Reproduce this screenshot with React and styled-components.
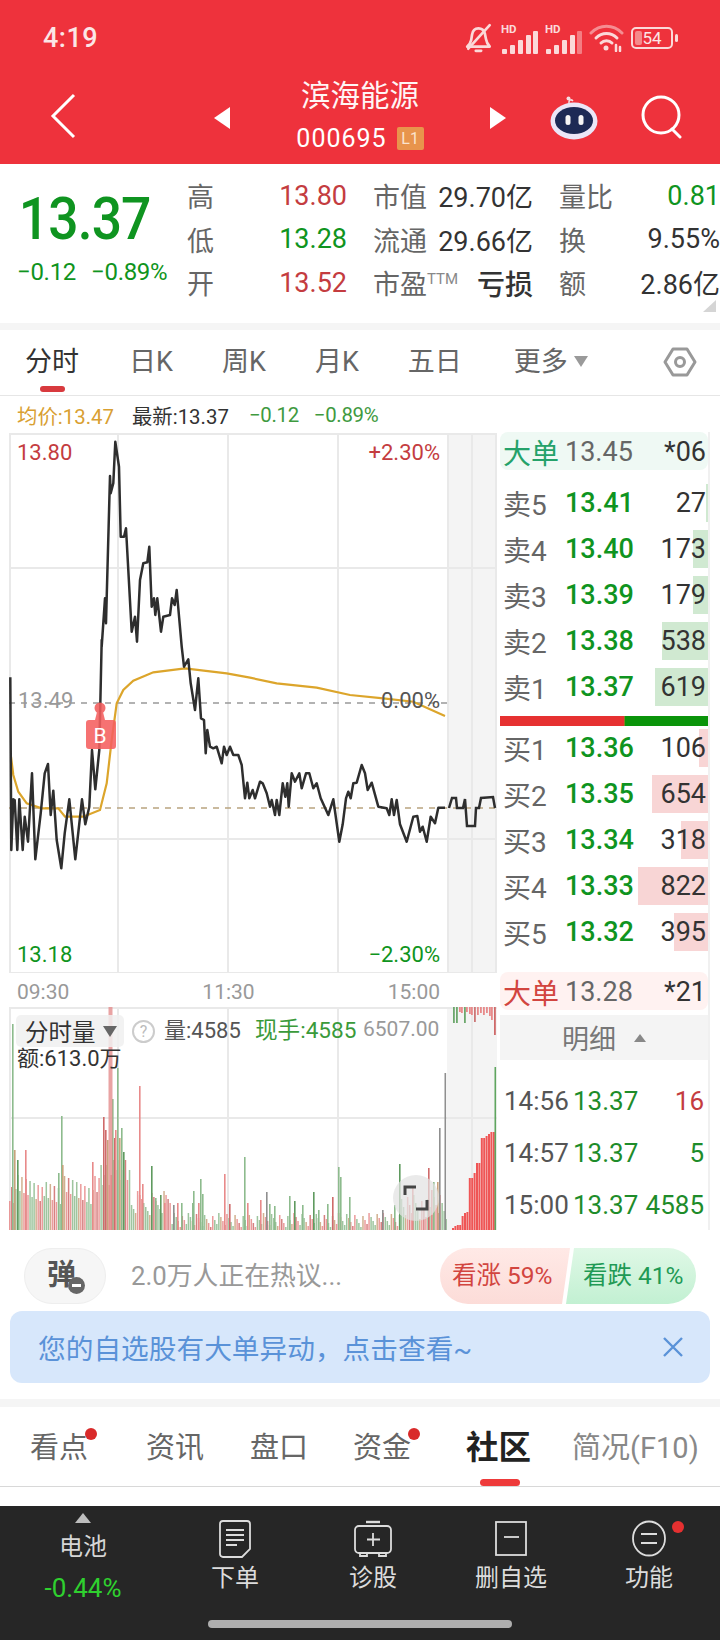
import React from "react";
import styled, { createGlobalStyle } from "styled-components";

const GREEN = "#0f9420";
const RED = "#c43c40";
const TEXT = "#333333";
const MUTED = "#666666";
const FONT = 'Roboto, "Noto Sans CJK SC", sans-serif';

const GlobalStyle = createGlobalStyle`
  html, body {
    margin: 0;
    padding: 0;
    background: #fff;
    font-family: ${FONT};
  }
  * {
    box-sizing: border-box;
  }
`;

const Page = styled.div`
  position: relative;
  width: 720px;
  height: 1640px;
  overflow: hidden;
  background: #fff;
  display: flex;
  flex-direction: column;
`;

/* red header */
const Header = styled.header`
  height: 164px;
  flex: none;
  background: #ee323c;
  color: #fff;
`;

const StatusBar = styled.div`
  height: 76px;
  padding: 0 42px 0 43px;
  display: flex;
  align-items: center;
  justify-content: space-between;
`;

const Clock = styled.div`
  font-size: 27px;
  font-weight: 500;
  color: #fbe6e6;
  letter-spacing: 0.5px;
`;

const StatusIcons = styled.div`
  display: flex;
  align-items: center;
  gap: 7px;
`;

const NavBar = styled.div`
  height: 88px;
  display: grid;
  grid-template-columns: 214px 16px 1fr 16px 214px;
  align-items: center;
`;

const BackSlot = styled.div`
  padding-left: 50px;
  display: flex;
  align-items: center;
  padding-bottom: 12px;
`;

const Triangle = styled.div`
  width: 0;
  height: 0;
  margin-bottom: 8px;
  border-top: 11px solid transparent;
  border-bottom: 11px solid transparent;
  ${(p) =>
    p.$dir === "left"
      ? "border-right: 16px solid #fff;"
      : "border-left: 16px solid #fff;"}
`;

const StockTitle = styled.div`
  display: flex;
  flex-direction: column;
  align-items: center;
  padding-bottom: 8px;
`;

const StockName = styled.div`
  font-size: 29.5px;
  line-height: 40px;
  color: #fff5f5;
`;

const CodeRow = styled.div`
  height: 44px;
  display: flex;
  align-items: center;
  gap: 10px;
`;

const StockCode = styled.div`
  font-size: 25px;
  letter-spacing: 1px;
`;

const LevelBadge = styled.div`
  width: 27px;
  height: 23px;
  border-radius: 2px;
  background: #e8944c;
  color: #fbe3cd;
  font-size: 16px;
  line-height: 23px;
  text-align: center;
`;

const NavTools = styled.div`
  display: flex;
  align-items: center;
  gap: 42px;
  padding-left: 44px;
  padding-bottom: 10px;
`;

/* quote summary */
const QuoteStrip = styled.section`
  height: 159px;
  flex: none;
  display: flex;
  padding-top: 10px;
`;

const PriceBlock = styled.div`
  width: 188px;
  padding: 12px 0 0 17px;
`;

const LastPrice = styled.div`
  font-size: 60px;
  line-height: 64px;
  margin-top: 1px;
  padding-left: 2px;
  font-weight: 500;
  color: ${GREEN};
  letter-spacing: -1px;
  transform: scaleX(0.89);
  transform-origin: left center;
  white-space: nowrap;
`;

const PriceChange = styled.div`
  display: flex;
  gap: 15px;
  margin-top: 6px;
  font-size: 24px;
  line-height: 30px;
  color: ${GREEN};
  letter-spacing: -0.3px;
  white-space: nowrap;
`;

const StatsGrid = styled.div`
  display: grid;
  grid-template-columns: 160px 160px 161px;
  grid-auto-rows: 43.5px;
  column-gap: 26px;
`;

const StatCell = styled.div`
  display: flex;
  justify-content: space-between;
  align-items: center;
  font-size: 27px;
  white-space: nowrap;
`;

const StatLabel = styled.span`
  color: ${MUTED};
  sup {
    font-size: 15px;
    color: #888;
    vertical-align: 10px;
    line-height: 0;
  }
`;

const StatValue = styled.span`
  color: ${(p) => p.$color || TEXT};
  font-size: ${(p) => (p.$bold ? 28 : 27)}px;
  font-weight: ${(p) => (p.$bold ? 500 : 400)};
`;

const CornerMark = styled.div`
  position: absolute;
  left: 703px;
  top: 300px;
  width: 13px;
  height: 12px;
  background: #d5d5d5;
  clip-path: polygon(100% 0, 100% 100%, 0 100%);
`;

const Separator = styled.div`
  height: ${(p) => p.$h || 7}px;
  margin-top: ${(p) => p.$mt || 0}px;
  flex: none;
  background: #f5f5f5;
`;

/* period tabs */
const PeriodTabs = styled.nav`
  position: relative;
  height: 66px;
  flex: none;
  display: flex;
  align-items: center;
  gap: 49px;
  padding: 0 0 2px 25px;
  border-bottom: 1px solid #e6e6e6;
`;

const PeriodTab = styled.div`
  position: relative;
  margin-left: ${(p) => p.$ml || 0}px;
  font-size: 27px;
  line-height: 36px;
  color: ${(p) => (p.$active ? TEXT : MUTED)};
  white-space: nowrap;
  display: flex;
  align-items: center;
  gap: 6px;
`;

const TabUnderline = styled.div`
  position: absolute;
  left: 15px;
  right: 14px;
  bottom: -12px;
  height: 6px;
  border-radius: 3px;
  background: #d83a3e;
`;

const DownCaret = styled.i`
  width: 0;
  height: 0;
  border-left: 7px solid transparent;
  border-right: 7px solid transparent;
  border-top: 11px solid ${(p) => p.$color || "#9a9a9a"};
`;

const SettingsSlot = styled.div`
  position: absolute;
  left: 663px;
  top: 15px;
`;

/* chart legend */
const Legend = styled.div`
  height: 37px;
  flex: none;
  display: flex;
  align-items: center;
  padding-left: 17px;
  font-size: 20.4px;
  white-space: nowrap;
`;

const LegendItem = styled.span`
  color: ${(p) => p.$color};
  margin-right: ${(p) => p.$gap}px;
  letter-spacing: ${(p) => p.$tight ? "-0.3px" : "0"};
`;

/* chart and order book */
const ChartRow = styled.div`
  height: 799px;
  flex: none;
  display: flex;
  padding-left: 9px;
`;

const ChartColumn = styled.div`
  width: 488px;
`;

const PricePane = styled.div`
  position: relative;
  height: 540px;
  svg {
    display: block;
  }
`;

const AxisLabel = styled.div`
  position: absolute;
  ${(p) => (p.$right ? `right: ${p.$right}px;` : `left: ${p.$left}px;`)}
  top: ${(p) => p.$top}px;
  font-size: 22px;
  line-height: 26px;
  color: ${(p) => p.$color};
  white-space: nowrap;
`;

const TimeAxis = styled.div`
  height: 34px;
  display: flex;
  justify-content: space-between;
  align-items: center;
  padding: 4px 57px 0 8px;
  font-size: 21px;
  color: #999;
`;

const VolumePane = styled.div`
  position: relative;
  height: 223px;
  svg {
    display: block;
  }
`;

const IndicatorChip = styled.div`
  position: absolute;
  left: 7px;
  top: 8px;
  width: 108px;
  height: 32px;
  padding-left: 9px;
  display: flex;
  align-items: center;
  gap: 7px;
  border-radius: 5px;
  background: rgba(240, 240, 240, 0.85);
  font-size: 23.5px;
  color: ${TEXT};
  white-space: nowrap;
`;

const HelpMark = styled.div`
  position: absolute;
  left: 123px;
  top: 13px;
  width: 23px;
  height: 23px;
  border: 2px solid #ccc;
  border-radius: 50%;
  color: #bbb;
  font-size: 16px;
  line-height: 19px;
  text-align: center;
`;

const VolumeText = styled.div`
  position: absolute;
  left: ${(p) => p.$left}px;
  top: ${(p) => p.$top}px;
  font-size: ${(p) => p.$size || 22}px;
  line-height: 28px;
  color: ${(p) => p.$color};
  white-space: nowrap;
`;

const ExpandButton = styled.div`
  position: absolute;
  left: 384px;
  top: 168px;
  width: 46px;
  height: 46px;
  border-radius: 50%;
  background: rgba(226, 226, 226, 0.72);
  display: flex;
  align-items: center;
  justify-content: center;
`;

const SidePanel = styled.aside`
  width: 213px;
  height: 798px;
  margin-top: -1px;
  padding: 0 0 0 3px;
  border-right: 2px solid #f0f0f0;
`;

const BigOrder = styled.div`
  height: 38px;
  margin-top: ${(p) => p.$mt || 0}px;
  display: grid;
  grid-template-columns: 62px 1fr auto;
  align-items: center;
  padding: 0 2px 0 3px;
  border-radius: 8px;
  background: ${(p) => (p.$up ? "#fff2f1" : "#eff9f4")};
  font-size: 27px;
  color: ${TEXT};
  white-space: nowrap;
`;

const BigOrderLabel = styled.span`
  font-size: 28px;
  color: ${(p) => (p.$up ? "#d2453f" : "#25a26a")};
`;

const BigOrderPrice = styled.span`
  color: ${MUTED};
`;

const BookList = styled.div`
  margin-top: ${(p) => p.$mt}px;
`;

const BookRow = styled.div`
  position: relative;
  height: 46px;
  display: grid;
  grid-template-columns: 62px 1fr auto;
  align-items: center;
  padding: 0 2px 0 3px;
  font-size: 27px;
  white-space: nowrap;
`;

const BookLabel = styled.span`
  position: relative;
  font-size: 28px;
  color: ${MUTED};
`;

const BookPrice = styled.span`
  position: relative;
  color: ${GREEN};
  font-weight: 500;
`;

const BookQty = styled.span`
  position: relative;
  color: ${TEXT};
`;

const QtyBar = styled.div`
  position: absolute;
  right: 0;
  top: 4px;
  bottom: 4px;
  background: ${(p) => (p.$buy ? "#f8d5d5" : "#d0e9d1")};
`;

const DepthBar = styled.div`
  height: 10px;
  margin: 6px 0 -1px;
  display: flex;
  background: #0a940a;
`;

const DepthFill = styled.div`
  width: 125px;
  background: #e63131;
  border-right: 1px solid #8a7a20;
`;

const DetailHead = styled.div`
  height: 45px;
  margin-top: 5px;
  display: flex;
  align-items: center;
  justify-content: center;
  gap: 18px;
  padding-left: 0;
  background: #f4f4f4;
  font-size: 27px;
  color: #777;
`;

const UpCaret = styled.i`
  width: 0;
  height: 0;
  border-left: 6px solid transparent;
  border-right: 6px solid transparent;
  border-bottom: 8px solid #888;
`;

const DetailList = styled.div`
  margin-top: 15px;
`;

const DetailRow = styled.div`
  height: 52px;
  display: grid;
  grid-template-columns: 69px 1fr auto;
  align-items: center;
  padding: 0 4px 0 4px;
  font-size: 26px;
  color: #555;
  white-space: nowrap;
`;

const DetailPrice = styled.span`
  color: #1e8c2a;
`;

const DetailQty = styled.span`
  color: ${(p) => (p.$up ? RED : "#1e8c2a")};
`;

/* discussion row */
const TalkRow = styled.div`
  height: 79px;
  flex: none;
  padding: 16px 24px 0;
  display: flex;
  align-items: flex-start;
`;

const BarrageButton = styled.div`
  position: relative;
  width: 82px;
  height: 56px;
  border: 1px solid #eeeeee;
  border-radius: 28px;
  background: #f6f6f6;
  color: #555;
  font-size: 29px;
  font-weight: 700;
  line-height: 52px;
  padding-left: 22px;
`;

const BarrageOff = styled.i`
  position: absolute;
  left: 43px;
  top: 28px;
  width: 17px;
  height: 17px;
  border-radius: 50%;
  background: #666;
  &::after {
    content: "";
    position: absolute;
    left: 4px;
    right: 4px;
    top: 7px;
    height: 3px;
    background: #fff;
  }
`;

const TalkText = styled.div`
  flex: 1;
  margin-left: 25px;
  font-size: 25.8px;
  line-height: 56px;
  color: #999;
  white-space: nowrap;
`;

const VotePill = styled.div`
  display: flex;
  height: 56px;
  font-size: 24.5px;
  line-height: 56px;
  white-space: nowrap;
`;

const VoteUp = styled.div`
  width: 130px;
  padding-left: 12px;
  border-radius: 28px 0 0 28px;
  background: linear-gradient(180deg, #ffe9e6, #fcdcd8);
  color: #d2453f;
  clip-path: polygon(0 0, 100% 0, calc(100% - 8px) 100%, 0 100%);
`;

const VoteDown = styled.div`
  width: 130px;
  margin-left: -4px;
  padding-left: 17px;
  border-radius: 0 28px 28px 0;
  background: linear-gradient(180deg, #dff8e6, #c2f0d2);
  color: #1f9a55;
  clip-path: polygon(8px 0, 100% 0, 100% 100%, 0 100%);
`;

const Banner = styled.div`
  height: 72px;
  flex: none;
  margin: 0 10px;
  padding: 0 26px 0 28px;
  display: flex;
  align-items: center;
  justify-content: space-between;
  border-radius: 12px;
  background: #d7e7fb;
  color: #5a92d8;
  font-size: 27.7px;
  white-space: nowrap;
`;

/* section tabs */
const SectionTabs = styled.nav`
  position: relative;
  height: 80px;
  flex: none;
  display: flex;
  align-items: center;
  padding: 0 0 4px 30px;
  border-bottom: 1px solid #d8d8d8;
`;

const SectionTab = styled.div`
  position: relative;
  margin-right: ${(p) => p.$gap}px;
  font-size: ${(p) => (p.$active ? 32.5 : 29)}px;
  font-weight: ${(p) => (p.$active ? 700 : 400)};
  color: ${(p) => (p.$active ? "#222" : p.$faint ? "#888" : MUTED)};
  white-space: nowrap;
`;

const RedDot = styled.i`
  position: absolute;
  right: -9px;
  top: 4px;
  width: 12px;
  height: 12px;
  border-radius: 50%;
  background: #d92a2a;
`;

const SectionUnderline = styled.div`
  position: absolute;
  left: 480px;
  bottom: 0;
  width: 40px;
  height: 7px;
  border-radius: 4px;
  background: #ee3a3a;
`;

/* dark bottom dock */
const Dock = styled.footer`
  margin-top: 19px;
  height: 134px;
  flex: none;
  background: #262626;
  display: flex;
  flex-direction: column;
`;

const DockRow = styled.div`
  height: 114px;
  display: grid;
  grid-template-columns: 166px repeat(4, 138px);
`;

const Battery = styled.div`
  display: flex;
  flex-direction: column;
  align-items: center;
  padding-top: 7px;
`;

const BatteryCaret = styled.i`
  width: 0;
  height: 0;
  border-left: 8px solid transparent;
  border-right: 8px solid transparent;
  border-bottom: 10px solid #bdbdbd;
`;

const BatteryName = styled.div`
  margin-top: 8px;
  font-size: 24px;
  line-height: 32px;
  color: #d6d6d6;
`;

const BatteryValue = styled.div`
  margin-top: 9px;
  font-size: 26px;
  line-height: 32px;
  color: #2fd02f;
`;

const DockItem = styled.div`
  position: relative;
  display: flex;
  flex-direction: column;
  align-items: center;
  padding-top: 14px;
  color: #dcdcdc;
  font-size: 24px;
  svg {
    display: block;
  }
`;

const DockLabel = styled.div`
  margin-top: 3px;
  line-height: 34px;
  white-space: nowrap;
`;

const DockDot = styled.i`
  position: absolute;
  left: 92px;
  top: 15px;
  width: 12px;
  height: 12px;
  border-radius: 50%;
  background: #e53030;
`;

const HomeBar = styled.div`
  width: 304px;
  height: 8px;
  margin: 0 auto;
  border-radius: 4px;
  background: #aeaeae;
`;

/* price line traced at 3x, split into two runs by y origin */
const UPPER = [[31,112],[34,630],[40,478],[44,480],[52,630],[58,478],[68,630],[74,530],[84,605],[96,400],[106,658],[122,520],[134,400],[144,372],[152,525],[160,452],[170,600],[184,685],[194,580],[208,478],[226,658],[246,478],[256,553],[268,500],[276,330],[286,448],[298,330],[305,0]];
const PEAK = [[305,950],[315,805],[318,880],[330,438],[332,490],[340,460],[346,335],[357,410],[362,620],[372,620],[378,595],[395,905],[405,860],[411,935],[420,750],[430,700],[442,697],[448,650],[455,830],[462,805],[466,855],[472,805],[483,905],[490,860],[510,855],[516,805],[524,825],[530,780],[545,950]];
const TAIL = [[552,80],[565,58],[572,130],[585,210],[595,115],[603,235],[612,240],[617,340],[622,270],[630,320],[640,325],[650,320],[665,370],[672,320],[680,345],[690,320],[700,345],[715,345],[725,375],[735,475],[742,428],[748,475],[758,450],[765,475],[780,425],[788,430],[800,460],[810,500],[815,480],[825,525],[830,480],[838,525],[848,430],[856,470],[862,430],[866,500],[875,400],[885,425],[898,400],[905,445],[918,400],[928,400],[940,445],[950,430],[962,475],[985,525],[1000,478],[1018,605],[1028,553],[1038,475],[1045,455],[1052,475],[1060,430],[1070,428],[1085,375],[1095,400],[1103,450],[1115,428],[1135,500],[1160,505],[1168,525],[1175,478],[1182,525],[1190,480],[1200,553],[1220,605],[1240,530],[1252,528],[1260,575],[1268,560],[1280,605],[1292,530],[1305,550],[1315,503],[1335,503]];
const AFTER_HOURS = "449,808 452,798 456,798 457,808 463,808 465,799 467,826 475,826 476,808 479,808 481,798 493,797 495,808";
const AVERAGE = [[33,350],[40,405],[55,455],[80,490],[125,505],[175,505],[195,530],[250,530],[300,510],[320,430],[335,300],[350,190],[370,150],[400,122],[460,97],[555,85],[680,100],[750,113],[830,130],[950,143],[1050,165],[1150,175],[1240,185],[1335,228]];

const scaled = (pts, originY) =>
  pts.map(([x, y]) => `${(x / 3).toFixed(1)},${(originY + y / 3).toFixed(1)}`).join(" ");

const PRICE_LINE = [scaled(UPPER, 640), scaled(PEAK, 330), scaled(TAIL, 640)].join(" ");

// tall volume bars: x, height, colour
const BAR_GREEN = "#8dbb8d";
const BAR_DARK = "#5f9a5f";
const BAR_RED = "#e88a8a";
const BAR_DEEP = "#cf6a6a";
const BAR_BROWN = "#c9a27c";
const BAR_GRAY = "#8f8f8f";

const SPIKES = [
  [12,206,BAR_GREEN],[14,80,BAR_BROWN],[17,70,BAR_DARK],[25,80,BAR_RED],[58,57,BAR_GREEN],[61,114,BAR_GREEN],[62,65,BAR_BROWN],[92,68,BAR_RED],
  [103,113,BAR_DEEP],[105,100,BAR_DEEP],[107,90,BAR_BROWN],[112,131,BAR_GREEN],[114,92,BAR_DEEP],[117,162,BAR_GREEN],[115,100,BAR_RED],[119,92,BAR_BROWN],[121,102,BAR_GREEN],[123,78,BAR_DARK],
  [139,144,BAR_RED],[142,46,BAR_RED],[151,64,BAR_DARK],[155,32,BAR_GREEN],[160,35,BAR_DARK],[164,27,BAR_RED],[173,25,BAR_GRAY],[177,27,BAR_RED],[181,27,BAR_GREEN],
  [192,27,BAR_GREEN],[193,39,BAR_GREEN],[198,27,BAR_RED],[200,51,BAR_GREEN],[202,36,BAR_GREEN],[224,56,BAR_RED],[229,26,BAR_DEEP],[244,73,BAR_GREEN],[247,27,BAR_RED],
  [260,30,BAR_RED],[266,38,BAR_GRAY],[269,26,BAR_GREEN],[274,24,BAR_GREEN],[289,34,BAR_GREEN],[294,29,BAR_DARK],[302,25,BAR_GREEN],[313,38,BAR_DARK],[318,20,BAR_GREEN],
  [327,26,BAR_GREEN],[332,33,BAR_DEEP],[338,63,BAR_GREEN],[340,53,BAR_GREEN],[349,33,BAR_GREEN],[382,20,BAR_GRAY],[394,25,BAR_GREEN],[399,66,BAR_DARK],[412,42,BAR_RED],
  [428,62,BAR_DEEP],[431,40,BAR_RED],[433,48,BAR_GREEN],[437,48,BAR_BROWN],[439,102,BAR_GRAY],[444.5,157,BAR_GRAY],
];

// smaller background volume, spaced by the minute
const envelope = (x) => {
  if (x < 100) return 26 + ((x * 7) % 30);
  if (x < 130) return 45 + ((x * 5) % 30);
  if (x < 170) return 14 + ((x * 11) % 26);
  if (x < 400) return 3 + ((x * 13) % 15);
  return 10 + ((x * 9) % 26);
};

const FILLER = Array.from({ length: 216 }, (_, i) => {
  const x = 9 + i * 2.03;
  const tone = [BAR_RED, BAR_GREEN, BAR_BROWN, BAR_RED, BAR_GREEN, BAR_DEEP, BAR_GREEN][(i * 5) % 7];
  return [x, envelope(Math.round(x)), tone];
});

// closing auction staircase: bar start and height, filled edge to edge
const AUCTION_STEPS = [[452,2],[454,4],[456,5],[460,14],[462,17],[466,18],[467,52],[472,57],[475,67],[480,92],[484,94],[487,96],[490,98]];
const AUCTION_BARS = Array.from({ length: 18 }, (_, i) => {
  const x = 452 + i * 2.4;
  const step = [...AUCTION_STEPS].reverse().find(([from]) => from <= x);
  return [x, step[1]];
});
const HANGING = [[453,16,"#6da86d"],[456,16,"#6da86d"],[459,5,BAR_RED],[461,6,BAR_RED],[464,16,"#6da86d"],[466,5,BAR_RED],[469,7,BAR_RED],[471,8,BAR_RED],[474,15,"#c77"],[477,8,BAR_RED],[480,6,BAR_RED],[483,8,BAR_RED],[486,6,BAR_RED],[489,9,BAR_RED],[491,13,BAR_RED],[494,28,BAR_DEEP]];

const ASKS = [["卖5", "13.41", 27], ["卖4", "13.40", 173], ["卖3", "13.39", 179], ["卖2", "13.38", 538], ["卖1", "13.37", 619]];
const BIDS = [["买1", "13.36", 106], ["买2", "13.35", 654], ["买3", "13.34", 318], ["买4", "13.33", 822], ["买5", "13.32", 395]];
const MAX_QTY = 822;

const STATS = [
  ["高", "13.80", RED, "市值", "29.70亿", "量比", "0.81", GREEN],
  ["低", "13.28", GREEN, "流通", "29.66亿", "换", "9.55%", TEXT],
  ["开", "13.52", RED, "市盈", "亏损", "额", "2.86亿", TEXT],
];

const TRADES = [["14:56", "16", true], ["14:57", "5", false], ["15:00", "4585", false]];

function BellOff() {
  return (
    <svg width="30" height="30" viewBox="0 0 28 28" fill="none" stroke="#fbd9d9" strokeWidth="2.500" strokeLinecap="round" strokeLinejoin="round">
      <path d="M3 22h21c-2-2-3-4-3.500-7l-1-5c-.8-3-3-5-6-5-3.500 0-5.500 2.500-6 6l-.8 5C6 19 5 20.500 3 22z" />
      <path d="M11 26h5" />
      <path d="M4 24L24 2" />
    </svg>
  );
}

function Signal({ faded }) {
  const bars = [[1, 18, 5], [9, 14, 9], [17, 9, 14], [25, 4, 19], [32, 0, 23]];
  return (
    <svg width="37" height="31" viewBox="0 0 37 31">
      <text x="0" y="10" fontSize="11.500" fontWeight="700" fontFamily="Roboto" fill="#fbd9d9">HD</text>
      {bars.map(([x, y, h], i) => (
        <rect key={x} x={x} y={y + 8} width="5" height={h} rx="1" fill="#fbd9d9" opacity={faded && i === 4 ? 0.45 : 1} />
      ))}
    </svg>
  );
}

function Wifi() {
  return (
    <svg width="35" height="28" viewBox="0 0 35 28" fill="none" stroke="#fbd9d9" strokeLinecap="round">
      <path d="M2 9c9-9 22-9 31 0" strokeWidth="3" opacity="0.55" />
      <path d="M7 14c6-6 15-6 21 0" strokeWidth="3" />
      <path d="M12 19c3-3 8-3 11 0" strokeWidth="3" />
      <circle cx="17" cy="24" r="2.500" fill="#fbd9d9" stroke="none" />
      <path d="M27 21v6M31 23v4" strokeWidth="2.500" />
    </svg>
  );
}

function BatteryIcon() {
  return (
    <svg width="47" height="24" viewBox="0 0 47 24">
      <rect x="1" y="2" width="40" height="20" rx="4" fill="none" stroke="#fbd9d9" strokeWidth="2" />
      <rect x="4" y="5" width="7" height="14" rx="2" fill="#f58a8a" />
      <rect x="44" y="8" width="3" height="8" rx="1.500" fill="#fbd9d9" />
      <text x="21" y="18" textAnchor="middle" fontSize="17" fontFamily="Roboto" fill="#fbe6e6">54</text>
    </svg>
  );
}

function RobotIcon() {
  return (
    <svg width="48" height="46" viewBox="0 0 48 46">
      <path d="M19 9c-.5-3 2-4 4-2" fill="none" stroke="#f4dfe4" strokeWidth="1.600" />
      <circle cx="18.500" cy="4.500" r="2" fill="#f4dfe4" />
      <ellipse cx="24" cy="27" rx="23.500" ry="18.500" fill="#ebe6f7" />
      <ellipse cx="24" cy="26.500" rx="19" ry="13.500" fill="#1d2a55" />
      <rect x="15.500" y="21" width="5" height="10" rx="2.500" fill="#f5f5f5" />
      <rect x="28.500" y="21" width="5" height="10" rx="2.500" fill="#f5f5f5" />
    </svg>
  );
}

function Hexagon() {
  return (
    <svg width="34" height="34" viewBox="0 0 34 34" fill="none" stroke="#999" strokeWidth="3">
      <path d="M10 4h14l8 13-8 13H10L2 17z" strokeLinejoin="round" />
      <circle cx="17" cy="17" r="4.500" />
    </svg>
  );
}

function PriceChart() {
  return (
    <svg width="488" height="540" viewBox="9 433 488 540">
      <rect x="447" y="433" width="50" height="540" fill="#f4f4f4" />
      <g stroke="#e9e9e9" strokeWidth="2" fill="none">
        <path d="M9 434H497M9 568H497M9 839H497M9 973H497" />
        <path d="M10 433V973M118 433V973M228 433V973M338 433V973M448 433V973M472 433V973M496 433V973" />
      </g>
      <path d="M9 703H447" stroke="#999" strokeWidth="1.500" strokeDasharray="6 6" fill="none" />
      <path d="M9 808H497" stroke="#b9a47f" strokeWidth="1.500" strokeDasharray="6 6" fill="none" />
      <polyline points={scaled(AVERAGE, 640)} fill="none" stroke="#dca52b" strokeWidth="2.200" />
      <polyline points={PRICE_LINE} fill="none" stroke="#2e2e2e" strokeWidth="2.500" strokeLinejoin="round" />
      <polyline points={AFTER_HOURS} fill="none" stroke="#2e2e2e" strokeWidth="2.500" />
      <g opacity="0.88">
        <circle cx="100" cy="708" r="5.500" fill="#f25c5c" />
        <path d="M97 712h6l2 8h8a3 3 0 0 1 3 3v23a3 3 0 0 1-3 3H89a3 3 0 0 1-3-3v-23a3 3 0 0 1 3-3h6z" fill="#f55f5f" />
      </g>
      <text x="100" y="743" textAnchor="middle" fontSize="21" fontFamily="Roboto" fill="#fff">B</text>
    </svg>
  );
}

function VolumeChart() {
  const bottom = 1230;
  return (
    <svg width="488" height="223" viewBox="9 1007 488 223">
      <rect x="447" y="1007" width="50" height="223" fill="#f4f4f4" />
      <g stroke="#e9e9e9" strokeWidth="2" fill="none">
        <path d="M9 1008H497M9 1118H497" />
        <path d="M10 1007V1230M118 1007V1230M228 1007V1230M338 1007V1230M472 1007V1230" />
      </g>
      {FILLER.map(([x, h, c]) => (
        <rect key={x} x={x} y={bottom - h} width="1.500" height={h} fill={c} opacity="0.85" />
      ))}
      {SPIKES.map(([x, h, c]) => (
        <rect key={x} x={x} y={bottom - h} width="1.600" height={h} fill={c} />
      ))}
      <rect x="108.500" y="1007" width="4" height="223" fill="#e48c8c" opacity="0.8" />
      {AUCTION_BARS.map(([x, h]) => (
        <rect key={x} x={x} y={bottom - h} width="2" height={h} fill="#ef5555" />
      ))}
      <rect x="494.500" y="1067" width="1.600" height="163" fill="#5fa55f" />
      {HANGING.map(([x, h, c]) => (
        <rect key={x} x={x} y="1007" width="1.800" height={h} fill={c} />
      ))}
    </svg>
  );
}

export default function App() {
  return (
    <Page>
      <GlobalStyle />
      <Header>
        <StatusBar>
          <Clock>4:19</Clock>
          <StatusIcons>
            <BellOff />
            <Signal />
            <Signal faded />
            <Wifi />
            <BatteryIcon />
          </StatusIcons>
        </StatusBar>
        <NavBar>
          <BackSlot>
            <svg width="26" height="46" viewBox="0 0 26 46" fill="none" stroke="#fff" strokeWidth="3">
              <path d="M24 2L3 23l21 21" />
            </svg>
          </BackSlot>
          <Triangle $dir="left" />
          <StockTitle>
            <StockName>滨海能源</StockName>
            <CodeRow>
              <StockCode>000695</StockCode>
              <LevelBadge>L1</LevelBadge>
            </CodeRow>
          </StockTitle>
          <Triangle $dir="right" />
          <NavTools>
            <RobotIcon />
            <svg width="44" height="44" viewBox="0 0 44 44" fill="none" stroke="#fff" strokeWidth="3">
              <circle cx="21" cy="20" r="18" />
              <path d="M32 34l8 8" strokeLinecap="round" />
            </svg>
          </NavTools>
        </NavBar>
      </Header>

      <QuoteStrip>
        <PriceBlock>
          <LastPrice>13.37</LastPrice>
          <PriceChange>
            <span>−0.12</span>
            <span>−0.89%</span>
          </PriceChange>
        </PriceBlock>
        <StatsGrid>
          {STATS.map(([a, aVal, aColor, b, bVal, c, cVal, cColor]) => (
            <React.Fragment key={a}>
              <StatCell>
                <StatLabel>{a}</StatLabel>
                <StatValue $color={aColor}>{aVal}</StatValue>
              </StatCell>
              <StatCell>
                <StatLabel>
                  {b}
                  {b === "市盈" && <sup>TTM</sup>}
                </StatLabel>
                <StatValue $bold={bVal === "亏损"}>{bVal}</StatValue>
              </StatCell>
              <StatCell>
                <StatLabel>{c}</StatLabel>
                <StatValue $color={cColor}>{cVal}</StatValue>
              </StatCell>
            </React.Fragment>
          ))}
        </StatsGrid>
        <CornerMark />
      </QuoteStrip>
      <Separator />

      <PeriodTabs>
        <PeriodTab $active>
          分时
          <TabUnderline />
        </PeriodTab>
        <PeriodTab $ml={1}>日K</PeriodTab>
        <PeriodTab>周K</PeriodTab>
        <PeriodTab>月K</PeriodTab>
        <PeriodTab>五日</PeriodTab>
        <PeriodTab $ml={3}>
          更多
          <DownCaret />
        </PeriodTab>
        <SettingsSlot>
          <Hexagon />
        </SettingsSlot>
      </PeriodTabs>

      <Legend>
        <LegendItem $color="#d9a032" $gap={18}>均价:13.47</LegendItem>
        <LegendItem $color={TEXT} $gap={20}>最新:13.37</LegendItem>
        <LegendItem $color="#3f9a3f" $gap={15} $tight>−0.12</LegendItem>
        <LegendItem $color="#3f9a3f" $gap={0} $tight>−0.89%</LegendItem>
      </Legend>

      <ChartRow>
        <ChartColumn>
          <PricePane>
            <PriceChart />
            <AxisLabel $left={8} $top={7} $color={RED}>13.80</AxisLabel>
            <AxisLabel $right={57} $top={7} $color={RED}>+2.30%</AxisLabel>
            <AxisLabel $left={9} $top={255} $color="#999">13.49</AxisLabel>
            <AxisLabel $right={57} $top={255} $color="#555">0.00%</AxisLabel>
            <AxisLabel $left={8} $top={509} $color={GREEN}>13.18</AxisLabel>
            <AxisLabel $right={57} $top={509} $color={GREEN}>−2.30%</AxisLabel>
          </PricePane>
          <TimeAxis>
            <span>09:30</span>
            <span>11:30</span>
            <span>15:00</span>
          </TimeAxis>
          <VolumePane>
            <VolumeChart />
            <IndicatorChip>
              分时量
              <DownCaret $color="#666" />
            </IndicatorChip>
            <HelpMark>?</HelpMark>
            <VolumeText $left={155} $top={10} $color="#555">量:4585</VolumeText>
            <VolumeText $left={246} $top={10} $size={22.6} $color="#3a9a3a">现手:4585</VolumeText>
            <VolumeText $left={354} $top={8} $size={21} $color="#999">6507.00</VolumeText>
            <VolumeText $left={8} $top={38} $color={TEXT}>额:613.0万</VolumeText>
            <ExpandButton>
              <svg width="26" height="26" viewBox="0 0 26 26" fill="none" stroke="#444" strokeWidth="3">
                <path d="M2 10V2h11" />
                <path d="M13 24h11v-9" />
              </svg>
            </ExpandButton>
          </VolumePane>
        </ChartColumn>

        <SidePanel>
          <BigOrder>
            <BigOrderLabel>大单</BigOrderLabel>
            <BigOrderPrice>13.45</BigOrderPrice>
            <span>*06</span>
          </BigOrder>
          <BookList $mt={10}>
            {ASKS.map(([label, price, qty]) => (
              <BookRow key={label}>
                <QtyBar style={{ width: (qty / MAX_QTY) * 70 }} />
                <BookLabel>{label}</BookLabel>
                <BookPrice>{price}</BookPrice>
                <BookQty>{qty}</BookQty>
              </BookRow>
            ))}
          </BookList>
          <DepthBar>
            <DepthFill />
          </DepthBar>
          <BookList $mt={0}>
            {BIDS.map(([label, price, qty]) => (
              <BookRow key={label}>
                <QtyBar $buy style={{ width: (qty / MAX_QTY) * 70 }} />
                <BookLabel>{label}</BookLabel>
                <BookPrice>{price}</BookPrice>
                <BookQty>{qty}</BookQty>
              </BookRow>
            ))}
          </BookList>
          <BigOrder $up $mt={17}>
            <BigOrderLabel $up>大单</BigOrderLabel>
            <BigOrderPrice>13.28</BigOrderPrice>
            <span>*21</span>
          </BigOrder>
          <DetailHead>
            明细
            <UpCaret />
          </DetailHead>
          <DetailList>
            {TRADES.map(([time, qty, up]) => (
              <DetailRow key={time}>
                <span>{time}</span>
                <DetailPrice>13.37</DetailPrice>
                <DetailQty $up={up}>{qty}</DetailQty>
              </DetailRow>
            ))}
          </DetailList>
        </SidePanel>
      </ChartRow>

      <TalkRow>
        <BarrageButton>
          弹
          <BarrageOff />
        </BarrageButton>
        <TalkText>2.0万人正在热议...</TalkText>
        <VotePill>
          <VoteUp>看涨 59%</VoteUp>
          <VoteDown>看跌 41%</VoteDown>
        </VotePill>
      </TalkRow>

      <Banner>
        您的自选股有大单异动，点击查看~
        <svg width="22" height="22" viewBox="0 0 22 22" fill="none" stroke="#5a92d8" strokeWidth="2.400">
          <path d="M2 2l18 18M20 2L2 20" />
        </svg>
      </Banner>

      <Separator $h={8} $mt={16} />

      <SectionTabs>
        <SectionTab $gap={58}>
          看点
          <RedDot />
        </SectionTab>
        <SectionTab $gap={46}>资讯</SectionTab>
        <SectionTab $gap={45}>盘口</SectionTab>
        <SectionTab $gap={55}>
          资金
          <RedDot />
        </SectionTab>
        <SectionTab $active $gap={41}>社区</SectionTab>
        <SectionTab $faint $gap={0}>简况(F10)</SectionTab>
        <SectionUnderline />
      </SectionTabs>

      <Dock>
        <DockRow>
          <Battery>
            <BatteryCaret />
            <BatteryName>电池</BatteryName>
            <BatteryValue>-0.44%</BatteryValue>
          </Battery>
          <DockItem>
            <svg width="34" height="38" viewBox="0 0 34 38" fill="none" stroke="#dcdcdc" strokeWidth="1.800">
              <path d="M5 1h24a3 3 0 0 1 3 3v25l-8 8H5a3 3 0 0 1-3-3V4a3 3 0 0 1 3-3z" />
              <path d="M8 10h18M8 15h18M8 20h18M8 25h11" />
            </svg>
            <DockLabel>下单</DockLabel>
          </DockItem>
          <DockItem>
            <svg width="40" height="38" viewBox="0 0 40 38" fill="none" stroke="#dcdcdc" strokeWidth="1.800">
              <path d="M13 2h14" strokeWidth="2.400" />
              <rect x="2" y="6" width="36" height="27" rx="4" />
              <path d="M20 13v13M14 19.500h13M7 33v3h7v-3M26 33v3h7v-3" />
            </svg>
            <DockLabel>诊股</DockLabel>
          </DockItem>
          <DockItem>
            <svg width="34" height="38" viewBox="0 0 34 38" fill="none" stroke="#dcdcdc" strokeWidth="1.800">
              <rect x="2" y="2" width="30" height="33" />
              <path d="M10 17h15" />
            </svg>
            <DockLabel>删自选</DockLabel>
          </DockItem>
          <DockItem>
            <svg width="36" height="38" viewBox="0 0 36 38" fill="none" stroke="#dcdcdc" strokeWidth="1.800">
              <ellipse cx="18" cy="18.500" rx="16" ry="17" />
              <path d="M10 14h16M10 23h16" />
            </svg>
            <DockDot />
            <DockLabel>功能</DockLabel>
          </DockItem>
        </DockRow>
        <HomeBar />
      </Dock>
    </Page>
  );
}
